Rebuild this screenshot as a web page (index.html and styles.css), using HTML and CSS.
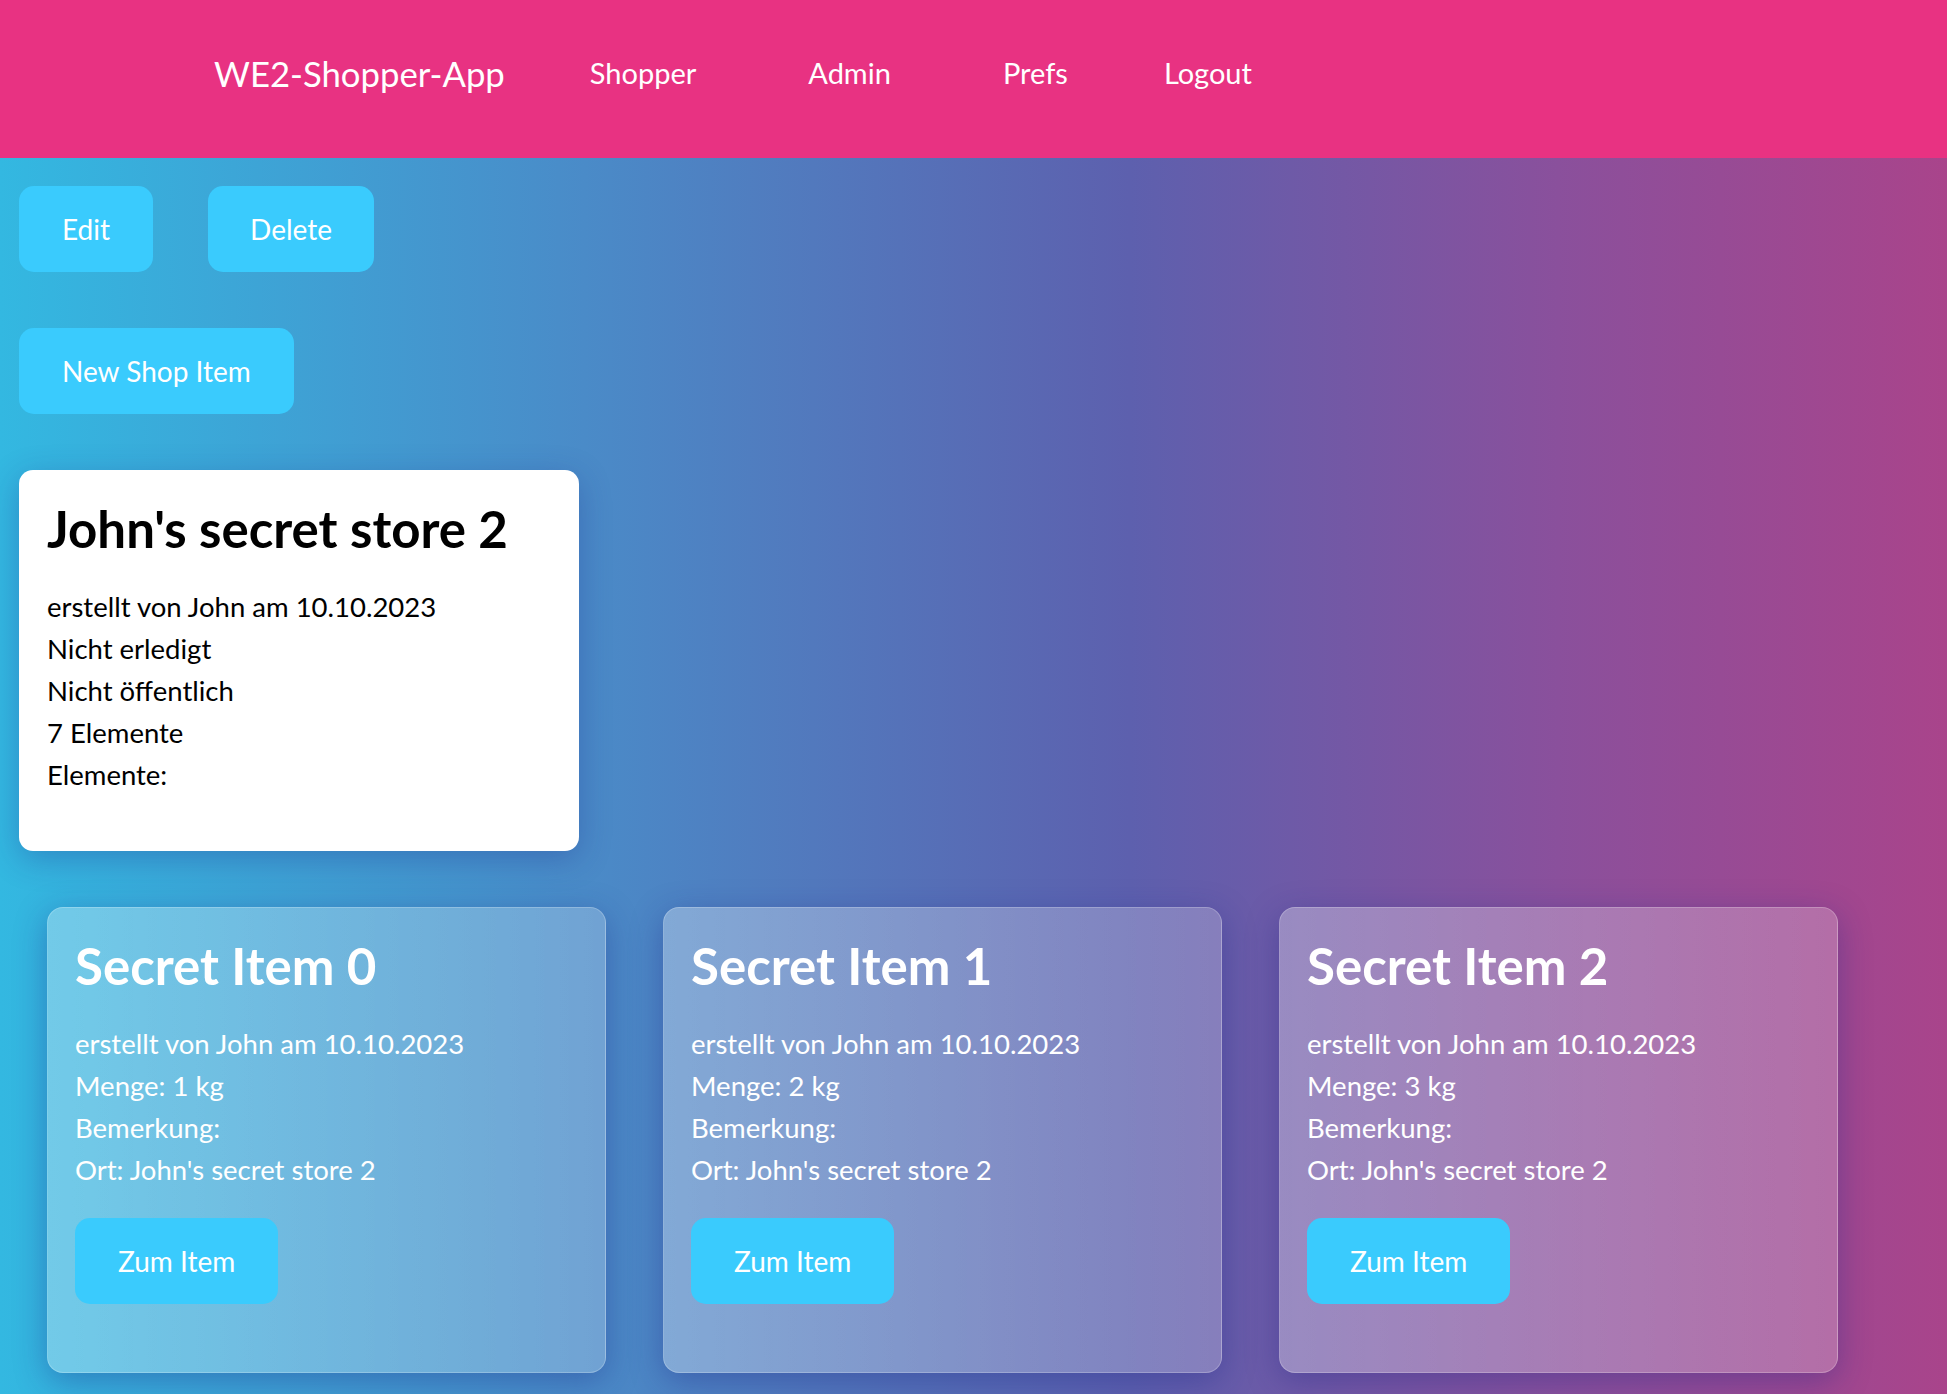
FILE: index.html
```html
<!DOCTYPE html>
<html lang="de">
<head>
<meta charset="utf-8">
<title>WE2-Shopper-App</title>
<link rel="stylesheet" href="styles.css">
</head>
<body>
<header class="navbar">
  <a class="brand" href="#">WE2-Shopper-App</a>
  <nav class="nav-links">
    <a class="nav-link" href="#">Shopper</a>
    <a class="nav-link" href="#">Admin</a>
    <a class="nav-link" href="#">Prefs</a>
    <a class="nav-link" href="#">Logout</a>
  </nav>
</header>
<main class="page">
  <div class="toolbar">
    <button class="btn">Edit</button>
    <button class="btn">Delete</button>
  </div>
  <div class="toolbar">
    <button class="btn">New Shop Item</button>
  </div>
  <section class="store-card">
    <h2 class="card-title">John's secret store 2</h2>
    <p class="line">erstellt von John am 10.10.2023</p>
    <p class="line">Nicht erledigt</p>
    <p class="line">Nicht öffentlich</p>
    <p class="line">7 Elemente</p>
    <p class="line">Elemente:</p>
  </section>
  <section class="items">
    <article class="item-card">
      <h2 class="card-title">Secret Item 0</h2>
      <p class="line">erstellt von John am 10.10.2023</p>
      <p class="line">Menge: 1 kg</p>
      <p class="line">Bemerkung:</p>
      <p class="line">Ort: John's secret store 2</p>
      <button class="btn item-btn">Zum Item</button>
    </article>
    <article class="item-card">
      <h2 class="card-title">Secret Item 1</h2>
      <p class="line">erstellt von John am 10.10.2023</p>
      <p class="line">Menge: 2 kg</p>
      <p class="line">Bemerkung:</p>
      <p class="line">Ort: John's secret store 2</p>
      <button class="btn item-btn">Zum Item</button>
    </article>
    <article class="item-card">
      <h2 class="card-title">Secret Item 2</h2>
      <p class="line">erstellt von John am 10.10.2023</p>
      <p class="line">Menge: 3 kg</p>
      <p class="line">Bemerkung:</p>
      <p class="line">Ort: John's secret store 2</p>
      <button class="btn item-btn">Zum Item</button>
    </article>
  </section>
</main>
</body>
</html>
```
FILE: styles.css
```css
* { box-sizing: border-box; }

html, body {
  margin: 0;
  padding: 0;
  min-height: 100%;
}

body {
  min-height: 100vh;
  font-family: Lato, "Open Sans", "Noto Sans", sans-serif;
  color: #fff;
  background: linear-gradient(to right, #33b8e1 0%, #4a8bc8 30%, #5d60ae 58%, #8a509c 80%, #a9448b 100%);
}

.navbar {
  display: flex;
  align-items: center;
  height: 158px;
  padding: 0 0 11px 214px;
  background: #e83282;
}

.brand {
  color: #fff;
  text-decoration: none;
  font-size: 34.7px;
  line-height: 1.2;
}

.nav-links {
  display: flex;
  align-items: center;
}

.nav-link {
  color: #fff;
  text-decoration: none;
  font-size: 29px;
  line-height: 1.2;
  margin-left: 112px;
}

.nav-link:first-child { margin-left: 85px; }
.nav-link:last-child { margin-left: 96px; }

.page {
  display: flex;
  flex-direction: column;
  align-items: flex-start;
  gap: 56px;
  padding: 28px 19px 21px;
}

.toolbar {
  display: flex;
  gap: 55px;
}

.btn {
  font-family: inherit;
  font-size: 28px;
  line-height: 42px;
  color: #fff;
  background: #3acbfd;
  border: 0;
  border-radius: 15px;
  padding: 22px 42px;
  cursor: pointer;
}

.toolbar .btn:first-child { padding: 22px 43px; }

.card-title {
  margin: 0 0 27px;
  font-size: 51px;
  line-height: 60px;
  font-weight: 700;
}

.line {
  margin: 0;
  font-size: 27.5px;
  line-height: 42px;
}

.store-card {
  width: 560px;
  padding: 29px 28px 55px;
  background: #fff;
  color: #000;
  border-radius: 14px;
  box-shadow: 0 8px 32px rgba(31, 38, 135, 0.3);
}

.items {
  display: flex;
  gap: 57px;
  padding-left: 28px;
}

.item-card {
  width: 559px;
  padding: 28px 27px 68px;
  border: 1px solid rgba(255, 255, 255, 0.22);
  border-radius: 16px;
  background: linear-gradient(to right, rgba(255, 255, 255, 0.3), rgba(255, 255, 255, 0.21));
  box-shadow: 0 8px 32px rgba(31, 38, 135, 0.37);
}

.item-btn {
  display: block;
  margin-top: 27px;
  padding: 22px 43px;
}
```
